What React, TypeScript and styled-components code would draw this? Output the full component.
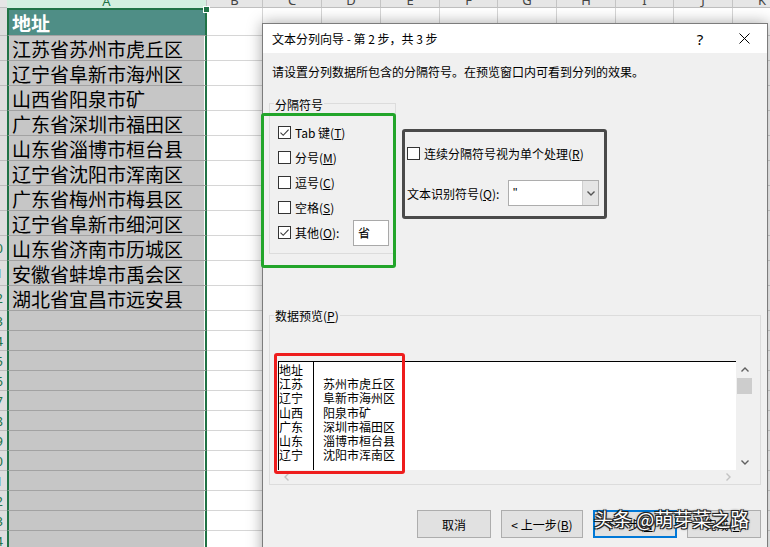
import React from 'react';
import styled, { createGlobalStyle } from 'styled-components';

// Excel sheet behind a "Text to Columns" wizard, step 2
const UI_FONT = '"Noto Sans CJK SC", "Noto Sans", sans-serif';

const COLORS = {
  excelGreen: '#217346',
  headerGray: '#e6e6e6',
  headerMint: '#d3f0e0',
  selectGray: '#c6c6c6',
  teal: '#4f8e86',
  grid: '#d6d6d6',
  dialogBg: '#f0f0f0',
  groupLine: '#dcdcdc',
  buttonBg: '#e1e1e1',
  buttonLine: '#adadad',
  focusBlue: '#0078d7',
};

const LETTERS = ['A', 'B', 'C', 'D', 'E', 'F', 'G', 'H', 'I', 'J', 'K'];
const COL_WIDTHS = [7, 200, 56, 59, 59, 59, 58, 59, 59, 58, 59, 59];
const ROW_HEIGHTS = [8, 28, ...Array(11).fill(25), ...Array(12).fill(20)];
const ROW_COUNT = ROW_HEIGHTS.length - 1;

const ADDRESSES = [
  '江苏省苏州市虎丘区',
  '辽宁省阜新市海州区',
  '山西省阳泉市矿',
  '广东省深圳市福田区',
  '山东省淄博市桓台县',
  '辽宁省沈阳市浑南区',
  '广东省梅州市梅县区',
  '辽宁省阜新市细河区',
  '山东省济南市历城区',
  '安徽省蚌埠市禹会区',
  '湖北省宜昌市远安县',
];

const PREVIEW = [
  ['地址', ''],
  ['江苏', '苏州市虎丘区'],
  ['辽宁', '阜新市海州区'],
  ['山西', '阳泉市矿'],
  ['广东', '深圳市福田区'],
  ['山东', '淄博市桓台县'],
  ['辽宁', '沈阳市浑南区'],
];

const GlobalStyle = createGlobalStyle`
  * { box-sizing: border-box; }
  html, body { margin: 0; padding: 0; background: #fff; overflow: hidden; }
  body { font-family: ${UI_FONT}; }
`;

const Screen = styled.div`
  position: relative;
  width: 770px;
  height: 547px;
  overflow: hidden;
  background: #fff;
  font-family: ${UI_FONT};
`;

/* ---------- spreadsheet ---------- */

const Sheet = styled.div`
  display: grid;
  grid-template-columns: ${COL_WIDTHS.map((w) => `${w}px`).join(' ')};
  grid-template-rows: ${ROW_HEIGHTS.map((h) => `${h}px`).join(' ')};
`;

const Corner = styled.div`
  background: ${COLORS.headerGray};
  border-bottom: 1px solid #bfbfbf;
`;

const ColHead = styled.div<{ $active?: boolean }>`
  display: flex;
  align-items: flex-end;
  justify-content: center;
  overflow: hidden;
  background: ${(p) => (p.$active ? COLORS.headerMint : COLORS.headerGray)};
  color: ${(p) => (p.$active ? COLORS.excelGreen : '#444')};
  border-right: 1px solid #c4c4c4;
  border-bottom: ${(p) => (p.$active ? 'none' : '1px solid #bfbfbf')};
  font-family: "Noto Sans", sans-serif;
  font-size: 13px;

  span {
    line-height: 13px;
  }
`;

const RowHead = styled.div`
  display: flex;
  align-items: center;
  justify-content: flex-end;
  overflow: hidden;
  background: #dedede;
  border-bottom: 1px solid #bdbdbd;
  color: ${COLORS.excelGreen};
  font-family: "Noto Sans", sans-serif;
  font-size: 13px;

  span {
    flex-shrink: 0;
    width: 23px;
    text-align: center;
  }
`;

const ACell = styled.div<{ $head?: boolean }>`
  position: relative;
  display: flex;
  align-items: center;
  padding-left: 3px;
  background: ${(p) => (p.$head ? COLORS.teal : COLORS.selectGray)};
  color: ${(p) => (p.$head ? '#fff' : '#000')};
  font-weight: ${(p) => (p.$head ? 700 : 400)};
  font-size: 19px;
  white-space: nowrap;
  border-left: 2px solid ${COLORS.excelGreen};
  border-right: 2px solid ${COLORS.excelGreen};
  border-top: ${(p) => (p.$head ? `2px solid ${COLORS.excelGreen}` : 'none')};
  border-bottom: 1px solid #a2a2a2;
  box-shadow: ${(p) => (p.$head ? 'none' : 'inset -1px 0 0 #fff')};
`;

const Handle = styled.span`
  position: absolute;
  top: -4px;
  right: -5px;
  width: 7px;
  height: 7px;
  background: ${COLORS.excelGreen};
  border: 1px solid #fff;
`;

const Cell = styled.div`
  background: #fff;
  border-right: 1px solid ${COLORS.grid};
  border-bottom: 1px solid ${COLORS.grid};
`;

/* ---------- dialog ---------- */

const Dialog = styled.div`
  position: absolute;
  left: 262px;
  top: 23px;
  width: 506px;
  height: 540px;
  border: 1px solid #7c7c7c;
  background: ${COLORS.dialogBg};
  box-shadow: 0 0 14px rgba(0, 0, 0, 0.35);
  font-size: 12px;
  color: #000;
`;

const TitleBar = styled.div`
  display: flex;
  align-items: center;
  height: 29px;
  background: #fff;
`;

const TitleText = styled.div`
  flex: 1;
  padding-left: 9px;
  line-height: 16px;
`;

const HelpButton = styled.div`
  width: 30px;
  margin-right: 6px;
  text-align: center;
  font-family: "Noto Sans", sans-serif;
  font-size: 15px;
`;

const CloseButton = styled.div`
  display: flex;
  align-items: center;
  justify-content: center;
  width: 46px;
  height: 29px;
`;

const Body = styled.div`
  padding: 11px 6px 0 6px;
`;

const Instruction = styled.p`
  margin: 0 0 0 3px;
  line-height: 16px;
  white-space: nowrap;
`;

const OptionsRow = styled.div`
  display: flex;
  align-items: flex-start;
  margin-top: 23px;
`;

const DelimGroup = styled.div`
  position: relative;
  width: 127px;
  height: 151px;
  padding: 16px 6px 0 8px;
  border: 1px solid ${COLORS.groupLine};
`;

const GroupLabel = styled.span`
  position: absolute;
  top: -7px;
  left: 4px;
  padding: 0 1px;
  line-height: 16px;
  background: ${COLORS.dialogBg};
  white-space: nowrap;
`;

const CheckRow = styled.div`
  display: flex;
  align-items: center;
  gap: 4px;
  height: 25px;
  white-space: nowrap;
`;

const Box = styled.span`
  display: flex;
  align-items: center;
  justify-content: center;
  flex-shrink: 0;
  width: 13px;
  height: 13px;
  background: #fff;
  border: 1px solid #333;
`;

const OtherInput = styled.div`
  display: flex;
  align-items: center;
  margin-left: auto;
  width: 36px;
  height: 26px;
  padding-left: 4px;
  background: #fff;
  border: 1px solid #a9a9a9;
`;

const OptionsColumn = styled.div`
  width: 192px;
  margin-left: 11px;
  padding-top: 42px;
`;

const OptionLine = styled.div`
  display: flex;
  align-items: center;
  gap: 4px;
  height: 16px;
  white-space: nowrap;
`;

const QualifierLine = styled.div`
  display: flex;
  align-items: center;
  height: 26px;
  margin-top: 19px;
  white-space: nowrap;
`;

const Combo = styled.div`
  display: flex;
  margin-left: auto;
  width: 91px;
  height: 26px;
  background: #fff;
  border: 1px solid ${COLORS.buttonLine};
`;

const ComboValue = styled.span`
  flex: 1;
  padding: 3px 0 0 4px;
  color: #000;
  font-family: "Liberation Sans", sans-serif;
  font-size: 12px;
  line-height: 18px;
`;

const ComboArrow = styled.span`
  display: flex;
  align-items: center;
  justify-content: center;
  width: 16px;
  background: #e5e5e5;
  border-left: 1px solid #cfcfcf;
`;

const PreviewGroup = styled.div`
  position: relative;
  width: 492px;
  margin-top: 61px;
  padding: 45px 0 0 8px;
  border: 1px solid ${COLORS.groupLine};
`;

const PreviewLabel = styled(GroupLabel)`
  top: -8px;
`;

const Preview = styled.div`
  display: grid;
  width: 475px;
  grid-template-columns: 1fr 17px;
  grid-template-rows: 109px 14px;
`;

const Pane = styled.div`
  display: flex;
  overflow: hidden;
  background: #fff;
  border-top: 1px solid #000;
  border-left: 1px solid #000;
  font-size: 12px;
  line-height: 14.2px;
`;

const PaneCol = styled.div<{ $first?: boolean }>`
  width: ${(p) => (p.$first ? '35px' : 'auto')};
  padding: 1px 0 0 ${(p) => (p.$first ? '0' : '9px')};
  border-right: ${(p) => (p.$first ? '1px solid #000' : 'none')};
  white-space: nowrap;

  div {
    height: 14.2px;
  }
`;

const VScroll = styled.div`
  display: flex;
  flex-direction: column;
  align-items: center;
  background: ${COLORS.dialogBg};
`;

const ArrowCell = styled.span`
  display: flex;
  align-items: center;
  justify-content: center;
  width: 17px;
  height: 17px;
  flex-shrink: 0;
`;

const Thumb = styled.span`
  width: 15px;
  height: 16px;
  background: #cdcdcd;
`;

const Spacer = styled.span`
  flex: 1;
`;

const HScroll = styled.div`
  display: flex;
  align-items: center;
  justify-content: space-between;
  background: ${COLORS.dialogBg};
`;

const ScrollCorner = styled.div`
  background: ${COLORS.dialogBg};
`;

const ButtonRow = styled.div`
  display: flex;
  justify-content: flex-end;
  gap: 10px;
  margin-top: 25px;
`;

const Button = styled.button<{ $w: number; $focus?: boolean }>`
  width: ${(p) => p.$w}px;
  height: 28px;
  padding: 0;
  background: ${COLORS.buttonBg};
  border: 1px solid ${(p) => (p.$focus ? COLORS.focusBlue : COLORS.buttonLine)};
  box-shadow: ${(p) => (p.$focus ? `inset 0 0 0 1px ${COLORS.focusBlue}` : 'none')};
  font-family: ${UI_FONT};
  font-size: 12px;
  color: #000;
`;

/* ---------- annotations drawn over the screenshot ---------- */

const Frame = styled.div<{ $color: string }>`
  position: absolute;
  border: 3px solid ${(p) => p.$color};
  border-radius: 3px;
  pointer-events: none;
`;

const GreenFrame = styled(Frame)`
  left: -2px;
  top: 89px;
  width: 135px;
  height: 155px;
`;

const DarkFrame = styled(Frame)`
  left: 139px;
  top: 105px;
  width: 205px;
  height: 90px;
`;

const RedFrame = styled(Frame)`
  left: 11px;
  top: 329px;
  width: 131px;
  height: 121px;
`;

const Watermark = styled.div`
  position: absolute;
  left: 331px;
  top: 483px;
  font-size: 19px;
  line-height: 24px;
  color: #fff;
  white-space: nowrap;
  text-shadow: 1px 1px 0 #222, -1px -1px 0 #222, 1px -1px 0 #222, -1px 1px 0 #222, 0 0 3px #000;
`;

/* ---------- small drawings ---------- */

const CheckMark = () => (
  <svg width="11" height="11" viewBox="0 0 11 11">
    <path d="M1.5 5.6 L4.2 8.3 L9.6 2.6" fill="none" stroke="#3a3a3a" strokeWidth="1.1" />
  </svg>
);

type Dir = 'up' | 'down' | 'left' | 'right';
const CHEVRONS: Record<Dir, string> = {
  up: 'M1.5 6.5 L5 3 L8.5 6.5',
  down: 'M1.5 3.5 L5 7 L8.5 3.5',
  left: 'M6.5 1.5 L3 5 L6.5 8.5',
  right: 'M3.5 1.5 L7 5 L3.5 8.5',
};

const Chevron = ({ dir, color }: { dir: Dir; color: string }) => (
  <svg width="10" height="10" viewBox="0 0 10 10">
    <path d={CHEVRONS[dir]} fill="none" stroke={color} strokeWidth="1.4" />
  </svg>
);

const CloseIcon = () => (
  <svg width="11" height="11" viewBox="0 0 11 11">
    <path d="M0.5 0.5 L10.5 10.5 M10.5 0.5 L0.5 10.5" stroke="#000" strokeWidth="1" />
  </svg>
);

const Check = ({ checked, children }: { checked?: boolean; children: React.ReactNode }) => (
  <CheckRow>
    <Box>{checked && <CheckMark />}</Box>
    {children}
  </CheckRow>
);

const App: React.FC = () => (
  <Screen>
    <GlobalStyle />
    <Sheet>
      <Corner />
      {LETTERS.map((l, i) => (
        <ColHead key={l} $active={i === 0}>
          <span>{l}</span>
        </ColHead>
      ))}
      {Array.from({ length: ROW_COUNT }, (_, r) => (
        <React.Fragment key={r}>
          <RowHead>
            <span>{r + 1}</span>
          </RowHead>
          <ACell $head={r === 0}>
            {r === 0 ? '地址' : ADDRESSES[r - 1] ?? ''}
            {r === 0 && <Handle />}
          </ACell>
          {LETTERS.slice(1).map((l) => (
            <Cell key={l} />
          ))}
        </React.Fragment>
      ))}
    </Sheet>

    <Dialog>
      <TitleBar>
        <TitleText>文本分列向导 - 第 2 步，共 3 步</TitleText>
        <HelpButton>?</HelpButton>
        <CloseButton>
          <CloseIcon />
        </CloseButton>
      </TitleBar>

      <Body>
        <Instruction>请设置分列数据所包含的分隔符号。在预览窗口内可看到分列的效果。</Instruction>

        <OptionsRow>
          <DelimGroup>
            <GroupLabel>分隔符号</GroupLabel>
            <Check checked>
              <span>Tab 键(<u>T</u>)</span>
            </Check>
            <Check>
              <span>分号(<u>M</u>)</span>
            </Check>
            <Check>
              <span>逗号(<u>C</u>)</span>
            </Check>
            <Check>
              <span>空格(<u>S</u>)</span>
            </Check>
            <Check checked>
              <span>其他(<u>O</u>):</span>
              <OtherInput>省</OtherInput>
            </Check>
          </DelimGroup>

          <OptionsColumn>
            <OptionLine>
              <Box />
              <span>连续分隔符号视为单个处理(<u>R</u>)</span>
            </OptionLine>
            <QualifierLine>
              <span>文本识别符号(<u>Q</u>):</span>
              <Combo>
                <ComboValue>"</ComboValue>
                <ComboArrow>
                  <Chevron dir="down" color="#555" />
                </ComboArrow>
              </Combo>
            </QualifierLine>
          </OptionsColumn>
        </OptionsRow>

        <PreviewGroup>
          <PreviewLabel>数据预览(<u>P</u>)</PreviewLabel>
          <Preview>
            <Pane>
              <PaneCol $first>
                {PREVIEW.map(([a], i) => (
                  <div key={i}>{a}</div>
                ))}
              </PaneCol>
              <PaneCol>
                {PREVIEW.map(([, b], i) => (
                  <div key={i}>{b}</div>
                ))}
              </PaneCol>
            </Pane>
            <VScroll>
              <ArrowCell>
                <Chevron dir="up" color="#606060" />
              </ArrowCell>
              <Thumb />
              <Spacer />
              <ArrowCell>
                <Chevron dir="down" color="#606060" />
              </ArrowCell>
            </VScroll>
            <HScroll>
              <ArrowCell>
                <Chevron dir="left" color="#c2c2c2" />
              </ArrowCell>
              <ArrowCell>
                <Chevron dir="right" color="#c2c2c2" />
              </ArrowCell>
            </HScroll>
            <ScrollCorner />
          </Preview>
        </PreviewGroup>

        <ButtonRow>
          <Button $w={74}>取消</Button>
          <Button $w={82}>&lt; 上一步(<u>B</u>)</Button>
          <Button $w={84} $focus>
            下一步(<u>N</u>) &gt;
          </Button>
          <Button $w={74}>完成(<u>F</u>)</Button>
        </ButtonRow>
      </Body>

      <GreenFrame $color="#22a52a" />
      <DarkFrame $color="#4a4a4a" />
      <RedFrame $color="#ee1d1d" />
      <Watermark>头条 @萌芽菜之路</Watermark>
    </Dialog>
  </Screen>
);

export default App;
